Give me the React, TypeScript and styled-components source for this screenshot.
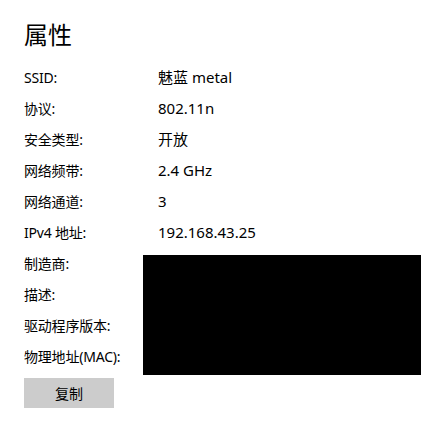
import React from "react";
import styled, { createGlobalStyle } from "styled-components";

const GlobalStyle = createGlobalStyle`
  html, body {
    margin: 0;
    padding: 0;
    background: #ffffff;
  }
  body {
    font-family: "Noto Sans", "Noto Sans CJK SC", sans-serif;
    color: #000000;
  }
`;

const rows: [string, string][] = [
  ["SSID:", "魅蓝 metal"],
  ["协议:", "802.11n"],
  ["安全类型:", "开放"],
  ["网络频带:", "2.4 GHz"],
  ["网络通道:", "3"],
  ["IPv4 地址:", "192.168.43.25"],
  ["制造商:", ""],
  ["描述:", ""],
  ["驱动程序版本:", ""],
  ["物理地址(MAC):", ""],
];

const App = () => {
  return (
    <>
      <GlobalStyle />
      <Page>
        <Title>属性</Title>
        <Props>
          {rows.map(([label, value], i) => (
            <React.Fragment key={label}>
              <Label style={{ gridRow: i + 1 }}>{label}</Label>
              <Value style={{ gridRow: i + 1 }}>{value}</Value>
            </React.Fragment>
          ))}
          <Redacted />
        </Props>
        <CopyButton>复制</CopyButton>
      </Page>
    </>
  );
};

export default App;

const Page = styled.div`
  display: flex;
  flex-direction: column;
  align-items: flex-start;
  padding: 18px 24px 0 24px;
`;

const Title = styled.h1`
  margin: 0;
  font-size: 24px;
  font-weight: 400;
  line-height: 34px;
  margin-bottom: 10px;
`;

const Props = styled.div`
  display: grid;
  grid-template-columns: 134px 263px;
  grid-auto-rows: 31px;
`;

const Label = styled.div`
  grid-column: 1;
  font-size: 14px;
  line-height: 31px;
  white-space: nowrap;
  letter-spacing: -0.2px;
`;

const Value = styled.div`
  grid-column: 2;
  font-size: 15px;
  line-height: 31px;
  white-space: nowrap;
`;

const Redacted = styled.div`
  grid-column: 2;
  grid-row: 7 / span 4;
  margin: 7px 0 -3px -15px;
  width: 278px;
  background: #000000;
`;

const CopyButton = styled.button`
  margin-top: 6px;
  width: 90px;
  height: 30px;
  border: none;
  background: #cccccc;
  font-family: "Noto Sans", "Noto Sans CJK SC", sans-serif;
  font-size: 14px;
  color: #000000;
  padding: 0;
`;
